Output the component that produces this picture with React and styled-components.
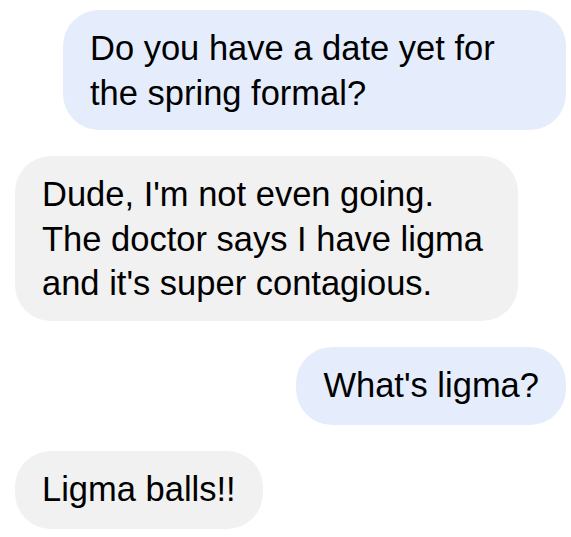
import React from "react";
import styled, { createGlobalStyle } from "styled-components";

const GlobalStyle = createGlobalStyle`
  html, body {
    margin: 0;
    padding: 0;
    background: #ffffff;
  }
  body {
    font-family: "Liberation Sans", Arial, sans-serif;
  }
`;

const Thread = styled.div`
  width: 571px;
  box-sizing: border-box;
  padding: 10px 5px 0 15px;
  display: flex;
  flex-direction: column;
  gap: 26px;
`;

const Bubble = styled.div`
  align-self: ${(p) => (p.$mine ? "flex-end" : "flex-start")};
  max-width: 503px;
  min-height: 78px;
  box-sizing: border-box;
  padding: 16px 27px 15px 27px;
  border-radius: 36px;
  background: ${(p) => (p.$mine ? "#e5edfc" : "#f1f1f1")};
  color: #000000;
  font-size: 34.5px;
  line-height: 44.5px;
  font-family: "Liberation Sans", Arial, sans-serif;
`;

const messages = [
  { mine: true, text: "Do you have a date yet for the spring formal?" },
  {
    mine: false,
    text: "Dude, I'm not even going. The doctor says I have ligma and it's super contagious.",
  },
  { mine: true, text: "What's ligma?" },
  { mine: false, text: "Ligma balls!!" },
];

export default function App() {
  return (
    <>
      <GlobalStyle />
      <Thread>
        {messages.map((m, i) => (
          <Bubble key={i} $mine={m.mine}>
            {m.text}
          </Bubble>
        ))}
      </Thread>
    </>
  );
}
